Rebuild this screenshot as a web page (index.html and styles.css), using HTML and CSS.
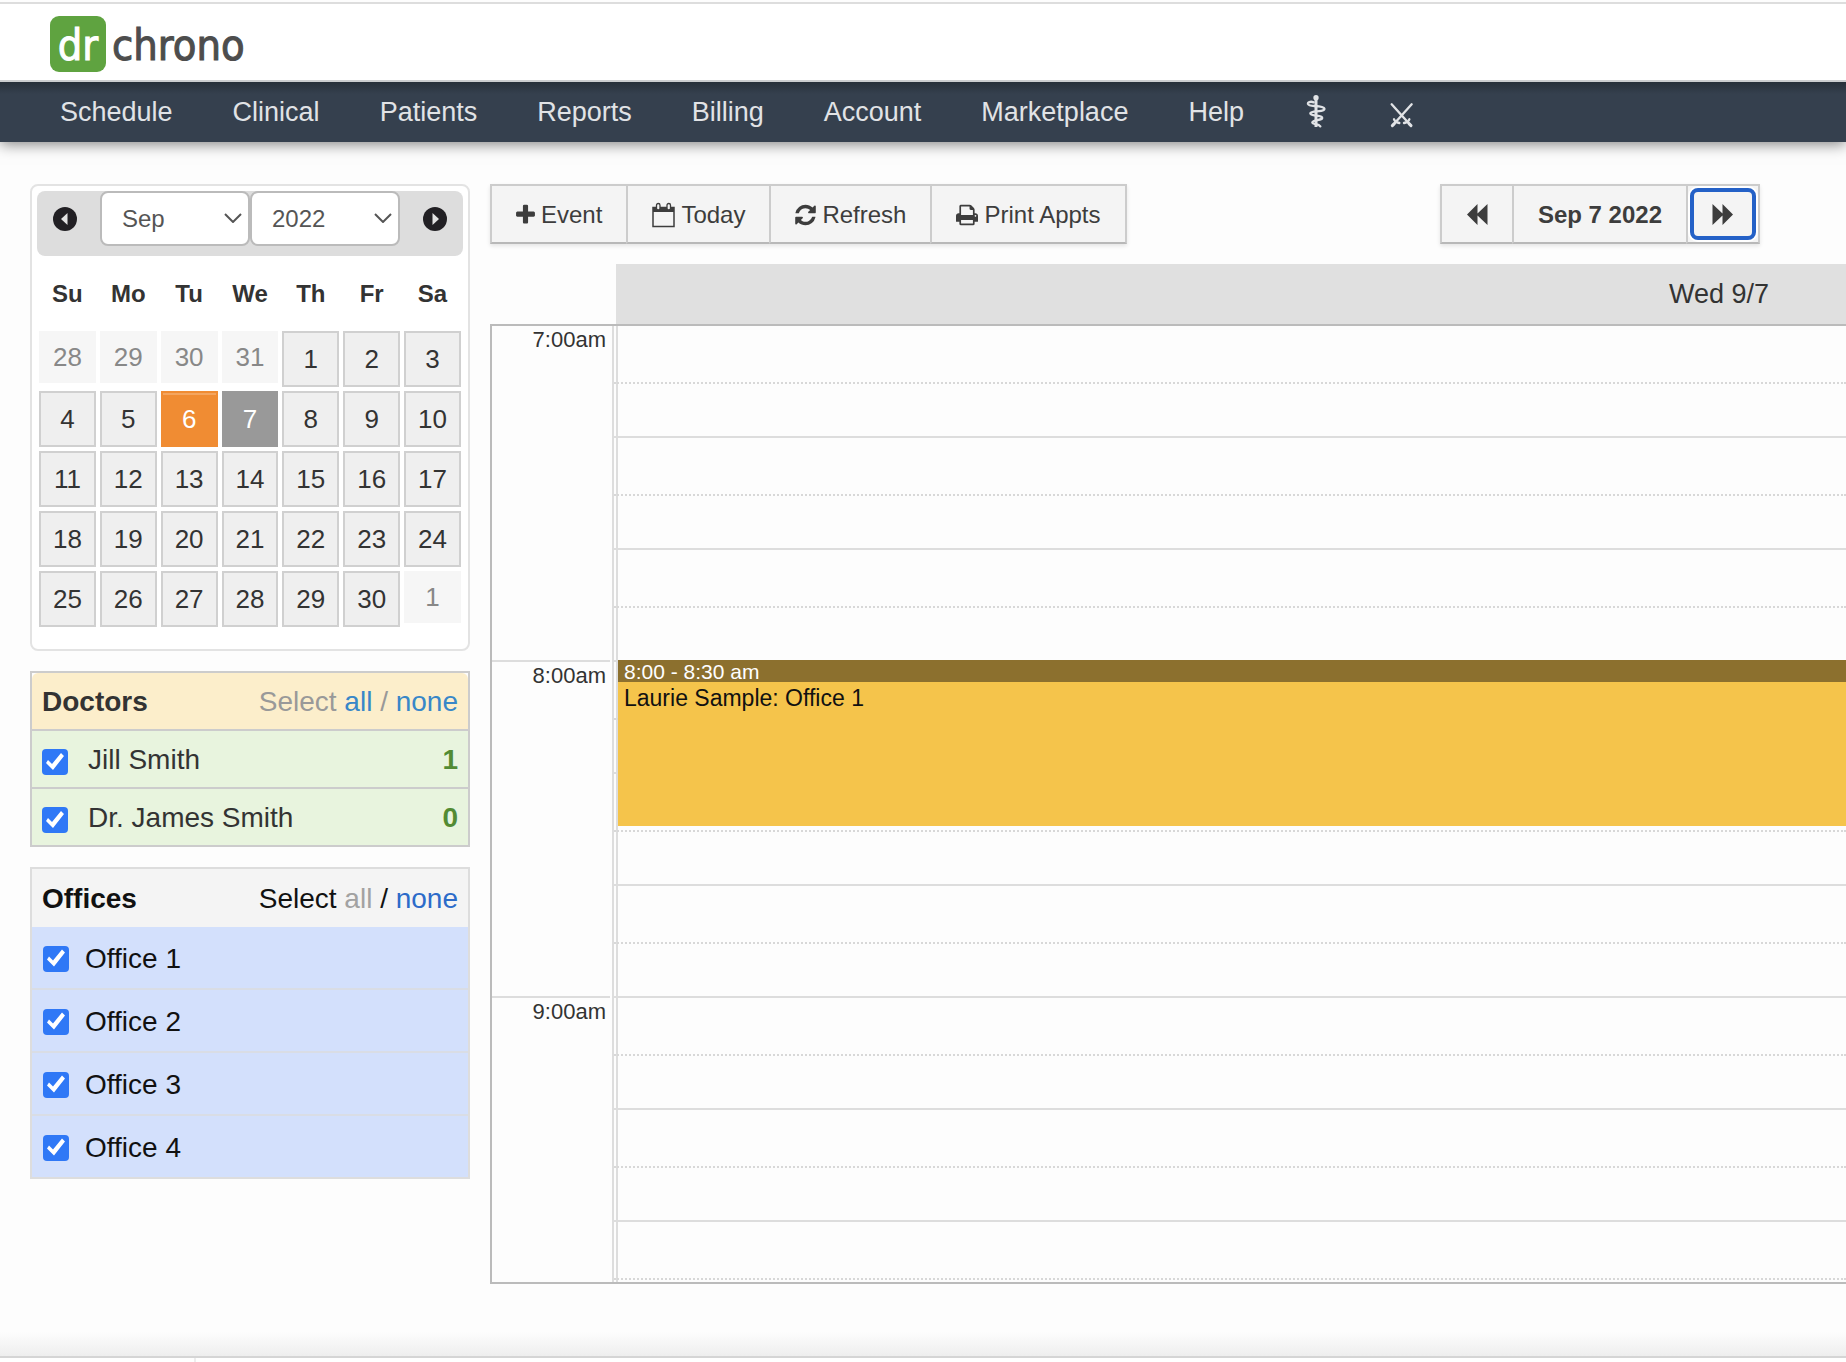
FILE: index.html
```html
<!DOCTYPE html>
<html lang="en">
<head>
<meta charset="utf-8">
<title>drchrono - Schedule</title>
<link rel="stylesheet" href="styles.css">
</head>
<body>
<header class="brand-bar">
  <a class="brand" href="#"><span class="brand-mark">dr</span><span class="brand-name">chrono</span></a>
</header>
<nav class="main-nav">
  <a href="#">Schedule</a>
  <a href="#">Clinical</a>
  <a href="#">Patients</a>
  <a href="#">Reports</a>
  <a href="#">Billing</a>
  <a href="#">Account</a>
  <a href="#">Marketplace</a>
  <a href="#">Help</a>
  <a class="nav-icon" href="#" aria-label="Medical"><svg viewBox="159 75 78 102" width="26" height="34"><circle cx="195" cy="83" r="8" fill="currentColor"/><path d="M195 85V171" stroke="currentColor" stroke-width="9" fill="none"/><path d="M188 97C178 93 170 97 171 102C173 109 188 107 204 109C218 111 224 116 218 120C208 127 180 121 178 130C178 139 206 135 213 142C218 152 186 148 184 157C185 164 202 161 208 169" stroke="currentColor" stroke-width="7" fill="none" stroke-linecap="round"/></svg></a>
  <a class="nav-icon" href="#" aria-label="Tools"><svg viewBox="417 75 78 102" width="26" height="34"><g stroke="currentColor" fill="none" stroke-linecap="round"><path d="M422 103L478 165M482 103L426 165" stroke-width="7"/><path d="M424 167L430 161M480 167L474 161" stroke-width="9"/><path d="M429 148L434 156L445 159M475 148L470 156L459 159" stroke-width="7"/></g></svg></a>
</nav>
<main class="page">
  <aside class="sidebar">
    <section class="calendar">
      <div class="calendar-head">
        <button class="step" type="button" aria-label="Previous month"><svg viewBox="0 0 24 24" width="24" height="24"><circle cx="12" cy="12" r="12" fill="#222024"/><path d="M14.500 6v12L8 12z" fill="#e3e3e3"/></svg></button>
        <div class="picker">
          <select aria-label="Month"><option>Sep</option></select>
          <svg class="chevron" viewBox="0 0 18 10" width="18" height="10"><path d="M1 1l8 8 8-8" fill="none" stroke="#555" stroke-width="2"/></svg>
        </div>
        <div class="picker">
          <select aria-label="Year"><option>2022</option></select>
          <svg class="chevron" viewBox="0 0 18 10" width="18" height="10"><path d="M1 1l8 8 8-8" fill="none" stroke="#555" stroke-width="2"/></svg>
        </div>
        <button class="step" type="button" aria-label="Next month"><svg viewBox="0 0 24 24" width="24" height="24"><circle cx="12" cy="12" r="12" fill="#222024"/><path d="M9.500 6v12l6.500-6z" fill="#e3e3e3"/></svg></button>
      </div>
      <table class="month">
        <thead><tr><th>Su</th><th>Mo</th><th>Tu</th><th>We</th><th>Th</th><th>Fr</th><th>Sa</th></tr></thead>
        <tbody>
          <tr><td><span class="other">28</span></td><td><span class="other">29</span></td><td><span class="other">30</span></td><td><span class="other">31</span></td><td><a href="#">1</a></td><td><a href="#">2</a></td><td><a href="#">3</a></td></tr>
          <tr><td><a href="#">4</a></td><td><a href="#">5</a></td><td><a class="today" href="#">6</a></td><td><a class="selected" href="#">7</a></td><td><a href="#">8</a></td><td><a href="#">9</a></td><td><a href="#">10</a></td></tr>
          <tr><td><a href="#">11</a></td><td><a href="#">12</a></td><td><a href="#">13</a></td><td><a href="#">14</a></td><td><a href="#">15</a></td><td><a href="#">16</a></td><td><a href="#">17</a></td></tr>
          <tr><td><a href="#">18</a></td><td><a href="#">19</a></td><td><a href="#">20</a></td><td><a href="#">21</a></td><td><a href="#">22</a></td><td><a href="#">23</a></td><td><a href="#">24</a></td></tr>
          <tr><td><a href="#">25</a></td><td><a href="#">26</a></td><td><a href="#">27</a></td><td><a href="#">28</a></td><td><a href="#">29</a></td><td><a href="#">30</a></td><td><span class="other">1</span></td></tr>
        </tbody>
      </table>
    </section>

    <section class="filter doctors">
      <div class="filter-head"><h2>Doctors</h2><p>Select <a href="#">all</a> / <a href="#">none</a></p></div>
      <label class="filter-row"><input type="checkbox" checked><span>Jill Smith</span><b>1</b></label>
      <label class="filter-row"><input type="checkbox" checked><span>Dr. James Smith</span><b>0</b></label>
    </section>

    <section class="filter offices">
      <div class="filter-head"><h2>Offices</h2><p>Select <span class="off">all</span> / <a href="#">none</a></p></div>
      <label class="filter-row"><input type="checkbox" checked><span>Office 1</span></label>
      <label class="filter-row"><input type="checkbox" checked><span>Office 2</span></label>
      <label class="filter-row"><input type="checkbox" checked><span>Office 3</span></label>
      <label class="filter-row"><input type="checkbox" checked><span>Office 4</span></label>
    </section>
  </aside>

  <section class="schedule">
    <div class="toolbar">
      <div class="button-group">
        <button type="button"><svg viewBox="192 0 1408 1792" width="19" height="24"><path fill="currentColor" d="M1600 736v192q0 40-28 68t-68 28h-416v416q0 40-28 68t-68 28h-192q-40 0-68-28t-28-68v-416h-416q-40 0-68-28t-28-68v-192q0-40 28-68t68-28h416v-416q0-40 28-68t68-28h192q40 0 68 28t28 68v416h416q40 0 68 28t28 68z"/></svg>Event</button>
        <button type="button"><svg viewBox="0 0 23 26" width="23" height="26"><path fill="none" stroke="currentColor" stroke-width="1.500" d="M1 5.500h21v19H1z"/><path fill="currentColor" d="M1 5h21v5H1z"/><rect x="4.500" y="1.500" width="3.500" height="6.500" rx="1.700" fill="#f4f4f4" stroke="currentColor" stroke-width="1.300"/><rect x="15" y="1.500" width="3.500" height="6.500" rx="1.700" fill="#f4f4f4" stroke="currentColor" stroke-width="1.300"/></svg>Today</button>
        <button type="button"><svg viewBox="128 0 1536 1792" width="21" height="24"><path fill="currentColor" d="M1639 1056q0 5-1 7-64 268-268 434.500t-478 166.500q-146 0-282.500-55t-243.500-157l-129 129q-19 19-45 19t-45-19-19-45v-448q0-26 19-45t45-19h448q26 0 45 19t19 45-19 45l-137 137q71 66 161 102t187 36q134 0 250-65t186-179q11-17 53-117 8-23 30-23h192q13 0 22.500 9.500t9.500 22.500zm25-800v448q0 26-19 45t-45 19h-448q-26 0-45-19t-19-45 19-45l138-138q-148-137-349-137-134 0-250 65t-186 179q-11 17-53 117-8 23-30 23h-199q-13 0-22.500-9.500t-9.500-22.500v-7q65-268 270-434.500t480-166.500q146 0 284 55.500t245 156.500l130-129q19-19 45-19t45 19 19 45z"/></svg>Refresh</button>
        <button type="button"><svg viewBox="64 0 1664 1792" width="22" height="24"><path fill="currentColor" d="M448 1536h896v-256h-896v256zm0-640h896v-384h-160q-40 0-68-28t-28-68v-160h-640v640zm1152 64q0-26-19-45t-45-19-45 19-19 45 19 45 45 19 45-19 19-45zm128 0v416q0 13-9.500 22.500t-22.500 9.500h-224v160q0 40-28 68t-68 28h-960q-40 0-68-28t-28-68v-160h-224q-13 0-22.500-9.500t-9.500-22.500v-416q0-79 56.500-135.500t135.500-56.500h64v-544q0-40 28-68t68-28h672q40 0 88 20t76 48l152 152q28 28 48 76t20 88v256h64q79 0 135.500 56.500t56.500 135.500z"/></svg>Print Appts</button>
      </div>
      <div class="button-group">
        <button type="button" aria-label="Previous day"><svg viewBox="0 0 22 22" width="22" height="22"><path fill="currentColor" d="M11.500 0v9.500L21.500 0v21l-10-9.500V21L1 10.500z"/></svg></button>
        <button class="date" type="button">Sep 7 2022</button>
        <button class="focused" type="button" aria-label="Next day"><svg viewBox="0 0 22 22" width="22" height="22"><path fill="currentColor" d="M10.500 0v9.500L.500 0v21l10-9.500V21L21 10.500z"/></svg></button>
      </div>
    </div>

    <div class="day-head">Wed 9/7</div>
    <div class="day-grid">
      <div class="hours">
        <div class="hour">7:00am</div>
        <div class="hour">8:00am</div>
        <div class="hour">9:00am</div>
      </div>
      <div class="slots">
        <div class="slot"></div><div class="slot"></div><div class="slot"></div>
        <div class="slot"></div><div class="slot"></div><div class="slot"></div>
        <div class="slot"></div><div class="slot"></div><div class="slot"></div>
        <article class="appointment">
          <header>8:00 - 8:30 am</header>
          <p>Laurie Sample: Office 1</p>
        </article>
      </div>
    </div>
  </section>
</main>
<footer class="status-bar"><div></div></footer>
</body>
</html>
```
FILE: styles.css
```css
* { box-sizing: border-box; }

body {
  margin: 0;
  background: #fdfdfd;
  color: #333;
  font-family: "Liberation Sans", Arial, sans-serif;
  font-size: 28px;
}

a { color: #3887c8; text-decoration: none; }
h2, p { margin: 0; font-size: inherit; }
button, select, input { margin: 0; font: inherit; color: inherit; }
svg { display: block; flex: none; }

/* Brand and navigation */
.brand-bar {
  margin-top: 2px;
  height: 80px;
  padding: 12px 50px;
  border-top: 2px solid #ddd;
  border-bottom: 2px solid #ccced0;
  background: #fff;
}
.brand {
  display: inline-flex;
  gap: 6px;
  font-family: "DejaVu Sans Condensed", "DejaVu Sans", sans-serif;
  font-stretch: condensed;
  font-size: 43px;
  line-height: 58px;
  color: #4d4d4d;
  -webkit-text-stroke: 1px currentColor;
}
.brand-mark {
  width: 56px;
  height: 56px;
  border-radius: 9px;
  background: #5fa340;
  color: #fff;
  text-align: center;
}
.main-nav {
  position: relative;
  display: flex;
  align-items: center;
  gap: 60px;
  height: 60px;
  padding: 0 60px;
  background: linear-gradient(#27303a, #35404e 12px);
  box-shadow: 0 2px 14px rgba(0, 0, 0, .5);
  clip-path: inset(0 0 -30px 0);
  font-size: 27px;
}
.main-nav a { color: #e1e3e6; }

/* Page */
.page {
  display: flex;
  align-items: flex-start;
  gap: 20px;
  padding: 42px 0 72px 30px;
  background: linear-gradient(to top, #eee, #fdfdfd 24px);
}
.sidebar {
  flex: none;
  display: flex;
  flex-direction: column;
  gap: 20px;
  width: 440px;
}

/* Month calendar */
.calendar {
  padding: 5px 5px 20px;
  border: 2px solid #e3e3e3;
  border-radius: 8px;
  background: #fff;
}
.calendar-head {
  display: flex;
  justify-content: center;
  padding: 0 0 10px;
  border-radius: 8px;
  background: #ddd;
}
.step {
  display: flex;
  align-items: center;
  justify-content: center;
  width: 56px;
  padding: 0;
  border: 0;
  background: none;
}
.step:first-child { margin-right: auto; }
.step:last-child { margin-left: auto; }
.picker { position: relative; width: 150px; }
.picker select {
  display: block;
  width: 100%;
  height: 55px;
  padding: 0 20px;
  border: 2px solid #bbb;
  border-radius: 8px;
  background: #fff;
  color: #555;
  font-size: 24px;
  appearance: none;
}
.chevron { position: absolute; right: 8px; top: 22px; pointer-events: none; }

.month {
  width: 100%;
  border-spacing: 0;
  table-layout: fixed;
  text-align: center;
  font-size: 26px;
}
.month th { height: 73px; padding: 2px 0 0; font-size: 24px; }
.month td { height: 60px; padding: 2px; vertical-align: top; }
.month a, .month span { display: block; line-height: 52px; }
.month a { border: 2px solid #d0d0d0; background: #efefef; color: #333; }
.month .other { background: #f6f6f6; color: #888; }
.month .today { border-color: #f08c33; background: #f08c33; color: #fff; box-shadow: inset 0 2px #f4a55f; }
.month .selected { border-color: #999; background: #999; color: #fff; }

/* Filters */
.filter { border: 2px solid #ccc; }
.filter-head, .filter-row { display: flex; align-items: center; padding: 2px 10px 0; }
.filter-head { justify-content: space-between; height: 56px; }
.filter-row input {
  width: 26px;
  height: 26px;
  border-radius: 4px;
  background: #2f78f6;
  appearance: none;
}
.filter-row input:checked::after {
  content: "";
  display: block;
  height: 26px;
  background: #fff;
  clip-path: polygon(4px 14px, 6px 11px, 10px 15px, 19px 4px, 22px 7px, 11px 21px);
}
.filter-row b { margin-left: auto; color: #528b33; }

.doctors .filter-head { border-radius: 6px 6px 0 0; background: #fceecb; }
.doctors .filter-head p { color: #999; }
.doctors .filter-row { height: 58px; border-top: 2px solid #ccc; background: #e8f4de; }
.doctors .filter-row input { margin: 4px 20px 0 0; }

.offices { border-color: #ddd; color: #111; }
.offices .filter-head { height: 58px; background: #f4f4f4; }
.offices .filter-head a { color: #2c6bc9; }
.offices .off { color: #a2a2a2; }
.offices .filter-row { height: 63px; border-bottom: 2px solid #d9dde5; background: #d3e0fc; }
.offices .filter-row input { margin: 0 16px 0 1px; }
.offices .filter-row:last-child { height: 61px; border-bottom: 0; }

/* Day schedule */
.schedule { flex: 1; min-width: 0; }
.toolbar {
  display: flex;
  justify-content: space-between;
  padding-right: 86px;
  margin-bottom: 20px;
}
.button-group { display: flex; box-shadow: 0 2px 4px rgba(0, 0, 0, .1); }
.button-group button {
  display: flex;
  align-items: center;
  gap: 6px;
  height: 60px;
  padding: 2px 24px 0;
  border: solid #ccc;
  border-width: 2px 0 2px 2px;
  border-bottom-color: #b8b8b8;
  background: #f4f4f4;
  color: #3d3d3d;
  font-size: 24px;
  white-space: nowrap;
}
.button-group button:last-child { border-right-width: 2px; }
.button-group .date { font-weight: bold; }
.button-group .focused { position: relative; }
.focused::after {
  content: "";
  position: absolute;
  inset: 2px;
  border: 4px solid #2461c7;
  border-radius: 8px;
  box-shadow: 0 0 0 2px #fff;
}

.day-head {
  height: 60px;
  margin-left: 126px;
  padding-right: 77px;
  background: #e0e0e0;
  font-size: 27px;
  line-height: 60px;
  text-align: right;
}
.day-grid {
  display: flex;
  border: 2px solid #bbb;
  border-right: 0;
}
.hours {
  flex: none;
  width: 122px;
  border-right: 2px solid #ddd;
}
.hour {
  height: 336px;
  margin-right: 2px;
  padding-right: 4px;
  border-top: 2px solid #ddd;
  font-size: 22px;
  line-height: 28px;
  text-align: right;
}
.hour:first-child { height: 334px; border-top: 0; }
.hour:last-child { height: 286px; }

.slots {
  position: relative;
  flex: 1;
  background: linear-gradient(#ddd, #ddd) 2px 0 / 2px 100% no-repeat;
}
.slot { display: flow-root; height: 112px; border-top: 2px solid #ddd; }
.slot::after {
  content: "";
  display: block;
  margin-top: 56px;
  border-top: 2px dotted #d8d8d8;
}
.slot:first-child { height: 110px; border-top: 0; }
.slot:nth-child(9) { height: 62px; }

/* Placed on the time scale: 336px per hour */
.appointment {
  position: absolute;
  top: 334px;
  left: 4px;
  right: 0;
  height: 166px;
  background: #f5c44b;
  color: #111;
  font-size: 23px;
  line-height: 32px;
}
.appointment header {
  height: 22px;
  padding-left: 6px;
  background: #8c702e;
  color: #fff;
  font-size: 21px;
  line-height: 24px;
}
.appointment p { padding-left: 6px; }

/* Bottom edge */
.status-bar { border-top: 2px solid #d5d5d5; background: #fff; }
.status-bar div { width: 196px; height: 4px; border-right: 2px solid #eee; }
```
